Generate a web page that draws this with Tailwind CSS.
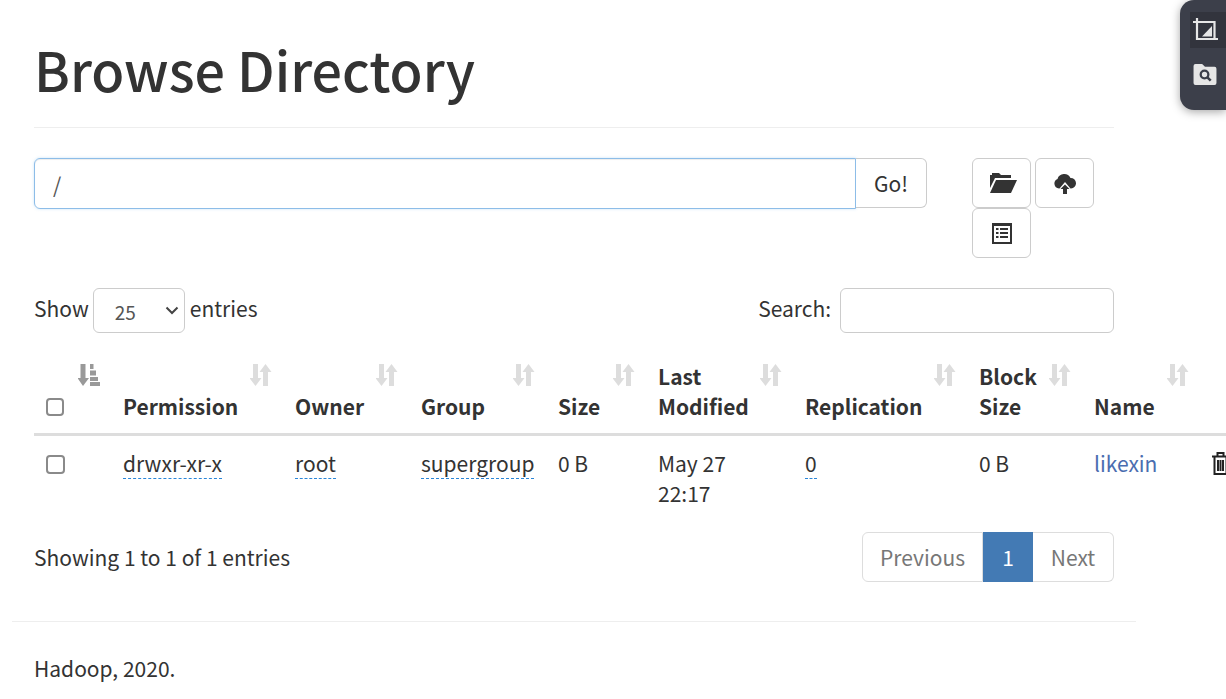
<!DOCTYPE html>
<html lang="en">
<head>
  <meta charset="UTF-8" />
  <title>Browse Directory</title>
  <script src="https://cdn.jsdelivr.net/npm/@tailwindcss/browser@4"></script>
</head>
<body class="bg-white text-[#333] text-[21px] leading-[30px] font-['Noto_Sans_CJK_SC','Noto_Sans',sans-serif] overflow-hidden h-[699px] relative">

<!-- screenshot tool overlay -->
<div class="absolute top-0 right-0 w-[46px] h-[110px] bg-[#3c3f4a] rounded-bl-[14px] rounded-tl-[14px] shadow-[0_2px_10px_rgba(0,0,0,0.35)] z-10 flex flex-col">
  <div class="h-[36px] mt-[12px] ml-[10px] bg-[#32343d] flex items-center justify-start pl-[3px]">
    <svg class="w-[25px] h-[25px]" viewBox="0 0 25 25" fill="none" stroke="#e6e6e6" stroke-width="2.200"><path d="M0 4h21.500v17M4 0v21h21"/><path d="M19 8v10.500H9z" fill="#e6e6e6" stroke="none"/></svg>
  </div>
  <div class="mt-[16px] pl-[13px]">
    <svg class="w-[24px] h-[21px]" viewBox="0 0 24 22"><path d="M2 0h7l3 3h10a2 2 0 0 1 2 2v15a2 2 0 0 1-2 2H2a2 2 0 0 1-2-2V2a2 2 0 0 1 2-2z" fill="#e6e6e6"/><circle cx="11.500" cy="11" r="4" fill="none" stroke="#3c3f4a" stroke-width="2.400"/><path d="M14.500 14l3.500 3.500" stroke="#3c3f4a" stroke-width="2.600"/></svg>
  </div>
</div>

<main class="w-[1124px] ml-[12px]">
  <div class="px-[22px]">
    <div class="h-[128px] border-b border-[#eee] pt-[29px]">
      <h1 class="text-[53.800px] leading-[80px] font-medium">Browse Directory</h1>
    </div>

    <div class="flex mt-[30px] h-[100px]">
      <div class="flex w-[893px] h-[51px]">
        <input type="text" value="/" class="w-[822px] h-[51px] px-[18px] border border-[#8dbde8] rounded-l-[6px] outline-none shadow-[inset_0_1px_1px_rgba(0,0,0,0.075),0_0_3px_rgba(102,175,233,0.35)] text-[#555]" />
        <button class="w-[71px] h-[50px] border border-[#ccc] border-l-0 rounded-r-[6px] bg-white">Go!</button>
      </div>
      <div class="ml-[45px] w-[130px] flex flex-wrap content-start gap-x-[4px]">
        <button class="w-[59px] h-[50px] border border-[#ccc] rounded-[6px] flex items-center justify-center">
          <svg class="w-[27px] h-[20px] ml-[3px]" viewBox="0 0 27 20" fill="#333"><path d="M0 2h2V0h7l2 2h10v3H5L0 15z"/><path d="M6 7h21l-6 13H0z"/></svg>
        </button>
        <button class="w-[59px] h-[50px] border border-[#ccc] rounded-[6px] flex items-center justify-center">
          <svg class="w-[22px] h-[21px]" viewBox="0 0 22 21" fill="#333"><path d="M5 15.500a5 5 0 0 1-1.500-9.600A7 7 0 0 1 16.500 5a5 5 0 0 1 .5 10.500h-.500L11 9l-5.500 6.500z"/><path d="M11 11.500l4.500 4.500H13v5H9v-5H6.500z"/></svg>
        </button>
        <button class="w-[59px] h-[50px] border border-[#ccc] rounded-[6px] flex items-center justify-center">
          <svg class="w-[20px] h-[21px]" viewBox="0 0 20 21"><path d="M0 0h20v21H0z" fill="#333"/><path d="M2 3h16v16H2z" fill="#fff"/><path d="M4 5h2.500v2H4zM8 5h8v2H8zM4 9h2.500v2H4zM8 9h8v2H8zM4 13h2.500v2H4zM8 13h8v2H8z" fill="#333"/></svg>
        </button>
      </div>
    </div>

    <div class="flex justify-between items-center w-[1080px] mt-[30px] h-[45px]">
      <div class="flex items-center">
        <span class="-mt-[6px]">Show</span>
        <div class="relative ml-[4px] mr-[5px] w-[92px] h-[45px] border border-[#ccc] rounded-[6px] flex items-center pl-[21px] pt-[3px] text-[19px] text-[#555]">
          25
          <svg class="absolute right-[5px] top-[17px] w-[14px] h-[9px]" viewBox="0 0 14 9" fill="none" stroke="#444" stroke-width="2"><path d="M1.500 1.500L7 7l5.500-5.500"/></svg>
        </div>
        <span class="-mt-[6px]">entries</span>
      </div>
      <div class="flex items-center">
        <span class="mr-[9px] -mt-[6px]">Search:</span>
        <input type="text" class="w-[274px] h-[45px] border border-[#ccc] rounded-[6px]" />
      </div>
    </div>

    <table class="table-fixed border-collapse w-[1260px] mt-[23px] max-w-none">
      <colgroup>
        <col class="w-[77px]" /><col class="w-[172px]" /><col class="w-[126px]" /><col class="w-[137px]" /><col class="w-[100px]" /><col class="w-[147px]" /><col class="w-[174px]" /><col class="w-[115px]" /><col class="w-[118px]" /><col class="w-[94px]" />
      </colgroup>
      <thead>
        <tr class="h-[78px] border-b-[3px] border-[#ddd] align-bottom text-left">
          <th class="relative px-[12px] pb-[12px] font-semibold">
            <input type="checkbox" class="block w-[18px] h-[18px] appearance-none border-2 border-[#8a8a8a] rounded-[4px] mb-[5px]" />
            <svg class="absolute left-[44px] top-[8px] w-[22px] h-[22px]" viewBox="0 0 22 22" fill="#999"><path d="M2.500 0h5v14h3.500L5 22 -.5 14h3z"/><path d="M12 0h3.500v5H12zM12 6.500h6v5h-6zM12 13h8v4h-8zM12 18h10v4H12z"/></svg>
          </th>
          <th class="relative px-[12px] pb-[12px] font-semibold">Permission<svg class="absolute right-[11px] top-[8px] w-[22px] h-[22px]" viewBox="0 0 22 22" fill="#ddd"><path d="M3 0h5v14h3.500L5.500 22-.5 14H3z"/><path d="M13 22h5V8h3.500L15.500 0 9.500 8H13z"/></svg></th>
          <th class="relative px-[12px] pb-[12px] font-semibold">Owner<svg class="absolute right-[11px] top-[8px] w-[22px] h-[22px]" viewBox="0 0 22 22" fill="#ddd"><path d="M3 0h5v14h3.500L5.500 22-.5 14H3z"/><path d="M13 22h5V8h3.500L15.500 0 9.500 8H13z"/></svg></th>
          <th class="relative px-[12px] pb-[12px] font-semibold">Group<svg class="absolute right-[11px] top-[8px] w-[22px] h-[22px]" viewBox="0 0 22 22" fill="#ddd"><path d="M3 0h5v14h3.500L5.500 22-.5 14H3z"/><path d="M13 22h5V8h3.500L15.500 0 9.500 8H13z"/></svg></th>
          <th class="relative px-[12px] pb-[12px] font-semibold">Size<svg class="absolute right-[11px] top-[8px] w-[22px] h-[22px]" viewBox="0 0 22 22" fill="#ddd"><path d="M3 0h5v14h3.500L5.500 22-.5 14H3z"/><path d="M13 22h5V8h3.500L15.500 0 9.500 8H13z"/></svg></th>
          <th class="relative px-[12px] pb-[12px] font-semibold">Last<br />Modified<svg class="absolute right-[11px] top-[8px] w-[22px] h-[22px]" viewBox="0 0 22 22" fill="#ddd"><path d="M3 0h5v14h3.500L5.500 22-.5 14H3z"/><path d="M13 22h5V8h3.500L15.500 0 9.500 8H13z"/></svg></th>
          <th class="relative px-[12px] pb-[12px] font-semibold">Replication<svg class="absolute right-[11px] top-[8px] w-[22px] h-[22px]" viewBox="0 0 22 22" fill="#ddd"><path d="M3 0h5v14h3.500L5.500 22-.5 14H3z"/><path d="M13 22h5V8h3.500L15.500 0 9.500 8H13z"/></svg></th>
          <th class="relative px-[12px] pb-[12px] font-semibold">Block<br />Size<svg class="absolute right-[11px] top-[8px] w-[22px] h-[22px]" viewBox="0 0 22 22" fill="#ddd"><path d="M3 0h5v14h3.500L5.500 22-.5 14H3z"/><path d="M13 22h5V8h3.500L15.500 0 9.500 8H13z"/></svg></th>
          <th class="relative px-[12px] pb-[12px] font-semibold">Name<svg class="absolute right-[11px] top-[8px] w-[22px] h-[22px]" viewBox="0 0 22 22" fill="#ddd"><path d="M3 0h5v14h3.500L5.500 22-.5 14H3z"/><path d="M13 22h5V8h3.500L15.500 0 9.500 8H13z"/></svg></th>
          <th></th>
        </tr>
      </thead>
      <tbody>
        <tr class="align-top h-[81px]">
          <td class="px-[12px] pt-[12px]"><input type="checkbox" class="block w-[19px] h-[19px] appearance-none border-2 border-[#8a8a8a] rounded-[4px] mt-[7px]" /></td>
          <td class="px-[12px] pt-[12px]"><span class="border-b border-dashed border-[#2a86d8]">drwxr-xr-x</span></td>
          <td class="px-[12px] pt-[12px]"><span class="border-b border-dashed border-[#2a86d8]">root</span></td>
          <td class="px-[12px] pt-[12px]"><span class="border-b border-dashed border-[#2a86d8]">supergroup</span></td>
          <td class="px-[12px] pt-[12px]">0 B</td>
          <td class="px-[12px] pt-[12px]">May 27<br />22:17</td>
          <td class="px-[12px] pt-[12px]"><span class="border-b border-dashed border-[#2a86d8]">0</span></td>
          <td class="px-[12px] pt-[12px]">0 B</td>
          <td class="px-[12px] pt-[12px]"><a class="text-[#4a6db0]">likexin</a></td>
          <td class="px-[12px] pt-[12px]">
            <svg class="w-[17px] h-[23px] mt-[4px]" viewBox="0 0 17 23" fill="none" stroke="#222" stroke-width="2"><path d="M0 4.500h17M5.500 4V1h6v3"/><path d="M2.500 5v17h12V5M6 8v11M8.500 8v11M11 8v11"/></svg>
          </td>
        </tr>
      </tbody>
    </table>

    <div class="flex justify-between items-center w-[1080px] mt-[17px] h-[50px]">
      <div>Showing 1 to 1 of 1 entries</div>
      <div class="flex h-[50px] text-[#777] items-center">
        <span class="w-[121px] h-full border border-[#ddd] rounded-l-[6px] flex items-center justify-center">Previous</span>
        <span class="w-[50px] h-full bg-[#437ab4] text-white flex items-center justify-center">1</span>
        <span class="w-[81px] h-full border border-l-0 border-[#ddd] rounded-r-[6px] flex items-center justify-center">Next</span>
      </div>
    </div>
  </div>

  <hr class="mt-[39px] border-[#eee]" />
  <p class="mt-[31px] ml-[22px]">Hadoop, 2020.</p>
</main>

</body>
</html>
